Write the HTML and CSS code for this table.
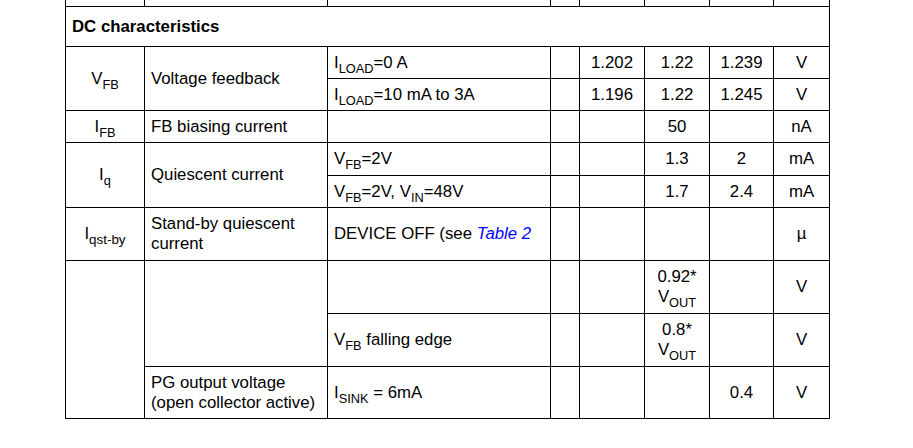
FILE: index.html
```html
<!DOCTYPE html>
<html lang="en">
<head>
<meta charset="utf-8">
<title>DC characteristics</title>
<link rel="stylesheet" href="styles.css">
</head>
<body>
<div class="page">
<table class="spec">
<colgroup>
<col class="c-sym"><col class="c-param"><col class="c-cond"><col class="c-note"><col class="c-min"><col class="c-typ"><col class="c-max"><col class="c-unit">
</colgroup>
<tbody>
<tr class="r-cont"><td></td><td></td><td></td><td></td><td></td><td></td><td></td><td></td></tr>
<tr class="r-section"><td colspan="8" class="section">DC characteristics</td></tr>
<tr class="r32">
<td rowspan="2" class="sym">V<sub>FB</sub></td>
<td rowspan="2" class="txt">Voltage feedback</td>
<td class="txt">I<sub>LOAD</sub>=0 A</td>
<td></td>
<td class="num">1.202</td>
<td class="num">1.22</td>
<td class="num">1.239</td>
<td class="num">V</td>
</tr>
<tr class="r32">
<td class="txt">I<sub>LOAD</sub>=10 mA to 3A</td>
<td></td>
<td class="num">1.196</td>
<td class="num">1.22</td>
<td class="num">1.245</td>
<td class="num">V</td>
</tr>
<tr class="r32">
<td class="sym">I<sub>FB</sub></td>
<td class="txt">FB biasing current</td>
<td></td>
<td></td>
<td></td>
<td class="num">50</td>
<td></td>
<td class="num">nA</td>
</tr>
<tr class="r33">
<td rowspan="2" class="sym">I<sub>q</sub></td>
<td rowspan="2" class="txt">Quiescent current</td>
<td class="txt">V<sub>FB</sub>=2V</td>
<td></td>
<td></td>
<td class="num">1.3</td>
<td class="num">2</td>
<td class="num">mA</td>
</tr>
<tr class="r32">
<td class="txt">V<sub>FB</sub>=2V, V<sub>IN</sub>=48V</td>
<td></td>
<td></td>
<td class="num">1.7</td>
<td class="num">2.4</td>
<td class="num">mA</td>
</tr>
<tr class="r53">
<td class="sym">I<sub class="sub-long">qst-by</sub></td>
<td class="txt">Stand-by quiescent current</td>
<td class="txt">DEVICE OFF (see <a class="xref">Table 2</a></td>
<td></td>
<td></td>
<td></td>
<td></td>
<td class="num unit-micro">µ</td>
</tr>
<tr class="r53">
<td rowspan="3" class="sym"></td>
<td rowspan="2" class="txt"></td>
<td class="txt"></td>
<td></td>
<td></td>
<td class="num">0.92*<br>V<sub>OUT</sub></td>
<td></td>
<td class="num">V</td>
</tr>
<tr class="r53">
<td class="txt">V<sub>FB</sub> falling edge</td>
<td></td>
<td></td>
<td class="num">0.8*<br>V<sub>OUT</sub></td>
<td></td>
<td class="num">V</td>
</tr>
<tr class="r52">
<td class="txt">PG output voltage (open collector active)</td>
<td class="txt">I<sub>SINK</sub> = 6mA</td>
<td></td>
<td></td>
<td></td>
<td class="num">0.4</td>
<td class="num">V</td>
</tr>
</tbody>
</table>
</div>
</body>
</html>
```
FILE: styles.css
```css
html, body {
  margin: 0;
  padding: 0;
  background: #ffffff;
}

.page {
  padding-left: 65px;
}

.spec {
  border-collapse: separate;
  border-spacing: 0;
  table-layout: fixed;
  width: 765px;
  border-left: 1px solid #000;
  font-family: "Liberation Sans", Arial, sans-serif;
  font-size: 16.8px;
  line-height: 20px;
  color: #000;
}

.c-sym { width: 79px; }
.c-param { width: 183px; }
.c-cond { width: 223px; }
.c-note { width: 29px; }
.c-min { width: 65px; }
.c-typ { width: 65px; }
.c-max { width: 64px; }
.c-unit { width: 56px; }

.spec td {
  box-sizing: border-box;
  border-right: 1px solid #000;
  border-bottom: 1px solid #000;
  padding: 0 6px;
  vertical-align: middle;
  overflow: hidden;
}

.r-cont { height: 7px; }
.r-section { height: 40px; }
.r32 { height: 32px; }
.r33 { height: 33px; }
.r53 { height: 53px; }
.r52 { height: 52px; }

.section {
  font-weight: bold;
  padding-left: 6px;
  padding-bottom: 2px;
}

.sym {
  text-align: center;
}

.txt {
  text-align: left;
}

.num {
  text-align: center;
  padding: 0 2px;
}

.unit-micro {
  padding-right: 12px;
}

sub {
  font-size: 12.8px;
  line-height: 0;
  vertical-align: -5px;
}

.sub-long {
  font-size: 13.4px;
}

.xref {
  color: #0000ff;
  font-style: italic;
  text-decoration: none;
}
```
